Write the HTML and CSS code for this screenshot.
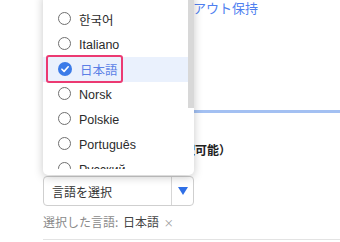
FILE: index.html
```html
<!DOCTYPE html>
<html lang="ja">
<head>
<meta charset="utf-8">
<link rel="stylesheet" href="styles.css">
</head>
<body>
<div class="page">
  <section class="top-section">
    <div class="opt-row"><span class="opt-link">前回のレイアウト保持</span></div>
  </section>
  <section class="lang-section">
    <div class="heading">表示言語の設定（複数選択可能）</div>
    <div class="select">
      <span class="select-text">言語を選択</span>
      <span class="select-arrow"><span class="tri"></span></span>
    </div>
    <div class="chosen"><span class="chosen-label">選択した言語:</span> <span class="chosen-val">日本語</span> <span class="chosen-x">×</span></div>
  </section>

  <div class="dropdown">
    <div class="viewport">
      <ul class="list">
        <li class="item"><span class="radio"></span><span class="label cjk">한국어</span></li>
        <li class="item"><span class="radio"></span><span class="label">Italiano</span></li>
        <li class="item selected"><span class="focus"></span><span class="radio checked"><svg viewBox="0 0 14 14" width="14" height="14"><circle cx="7" cy="7" r="7" fill="#3b7be8"/><path d="M3.9 7.2 L6.1 9.4 L10.2 4.8" fill="none" stroke="#fff" stroke-width="1.6" stroke-linecap="round" stroke-linejoin="round"/></svg></span><span class="label cjk">日本語</span></li>
        <li class="item"><span class="radio"></span><span class="label">Norsk</span></li>
        <li class="item"><span class="radio"></span><span class="label">Polskie</span></li>
        <li class="item"><span class="radio"></span><span class="label">Português</span></li>
        <li class="item"><span class="radio"></span><span class="label">Русский</span></li>
      </ul>
    </div>
    <div class="track"><div class="thumb"></div></div>
  </div>
</div>
</body>
</html>
```

FILE: styles.css
```css
* { box-sizing: border-box; }
html, body { margin: 0; padding: 0; }
body {
  width: 340px;
  height: 242px;
  overflow: hidden;
  background: #fff;
  font-family: "Liberation Sans", "Noto Sans CJK JP", sans-serif;
  color: #333;
}
.page {
  position: relative;
  width: 340px;
  height: 242px;
}
.top-section {
  margin-left: 43px;
  height: 113px;
  border-bottom: 3px solid #a3c0f2;
}
.opt-row {
  padding-left: 85px;
  font-family: "Noto Sans CJK JP", sans-serif;
  font-size: 13px;
  line-height: 16px;
  white-space: nowrap;
}
.opt-link { color: #4f7ff0; }
.lang-section {
  margin-left: 43px;
  padding-top: 29px;
  height: 127px;
  border-bottom: 1px solid #e3e3e3;
}
.heading {
  padding-left: 8px;
  font-family: "Noto Sans CJK JP", sans-serif;
  font-weight: bold;
  font-size: 12px;
  line-height: 16px;
  color: #222;
  white-space: nowrap;
}
.select {
  margin-top: 18px;
  width: 151px;
  height: 30px;
  border: 1px solid #cfcfcf;
  border-radius: 4px;
  display: flex;
  align-items: center;
}
.select-text {
  flex: 1;
  padding-left: 8px;
  font-family: "Noto Sans CJK JP", sans-serif;
  font-size: 12px;
  color: #333;
}
.select-arrow {
  width: 22px;
  height: 100%;
  border-left: 1px solid #d6d6d6;
  display: flex;
  align-items: center;
  justify-content: center;
}
.tri {
  width: 0; height: 0;
  border-left: 5px solid transparent;
  border-right: 5px solid transparent;
  border-top: 8px solid #2f6fe6;
}
.chosen {
  margin-top: 8px;
  font-family: "Noto Sans CJK JP", sans-serif;
  font-size: 12px;
  line-height: 16px;
  white-space: nowrap;
}
.chosen-label { color: #8a8a8a; }
.chosen-val { color: #444; margin-left: 2px; }
.chosen-x { color: #999; font-size: 10px; margin-left: 2px; }

/* overlay dropdown */
.dropdown {
  position: absolute;
  left: 43px;
  top: -6px;
  width: 151px;
  height: 181px;
  padding-bottom: 6px;
  background: #fff;
  border-radius: 0 0 5px 5px;
  box-shadow: 0 2px 10px rgba(0,0,0,0.22);
  overflow: hidden;
  display: flex;
  align-items: flex-start;
}
.viewport {
  flex: 1;
  height: 100%;
  overflow: hidden;
}
.list {
  list-style: none;
  margin: 0;
  padding: 13px 0 0 0;
}
.item {
  position: relative;
  height: 25px;
  display: flex;
  align-items: center;
  padding-left: 15px;
  gap: 8px;
  font-size: 12.5px;
  color: #2b2b2b;
}
.item.selected { background: #eaf1fd; }
.item.selected .label { color: #5a7fe6; }
.radio {
  width: 13px;
  height: 13px;
  border: 1px solid #6f6f6f;
  border-radius: 50%;
  margin-top: -2px;
  flex: none;
  display: flex;
  align-items: center;
  justify-content: center;
}
.radio.checked { border: none; width: 14px; height: 14px; }
.radio svg { display: block; }
.label { white-space: nowrap; }
.cjk { font-family: "Noto Sans CJK JP", "Noto Sans CJK KR", sans-serif; }
.focus {
  position: absolute;
  left: 3px;
  top: -2px;
  width: 77px;
  height: 28px;
  border: 2px solid #ec3a72;
  border-radius: 3px;
}
.track {
  width: 6px;
  flex: none;
}
.thumb {
  height: 114px;
  background: #d8d8d8;
}
```
